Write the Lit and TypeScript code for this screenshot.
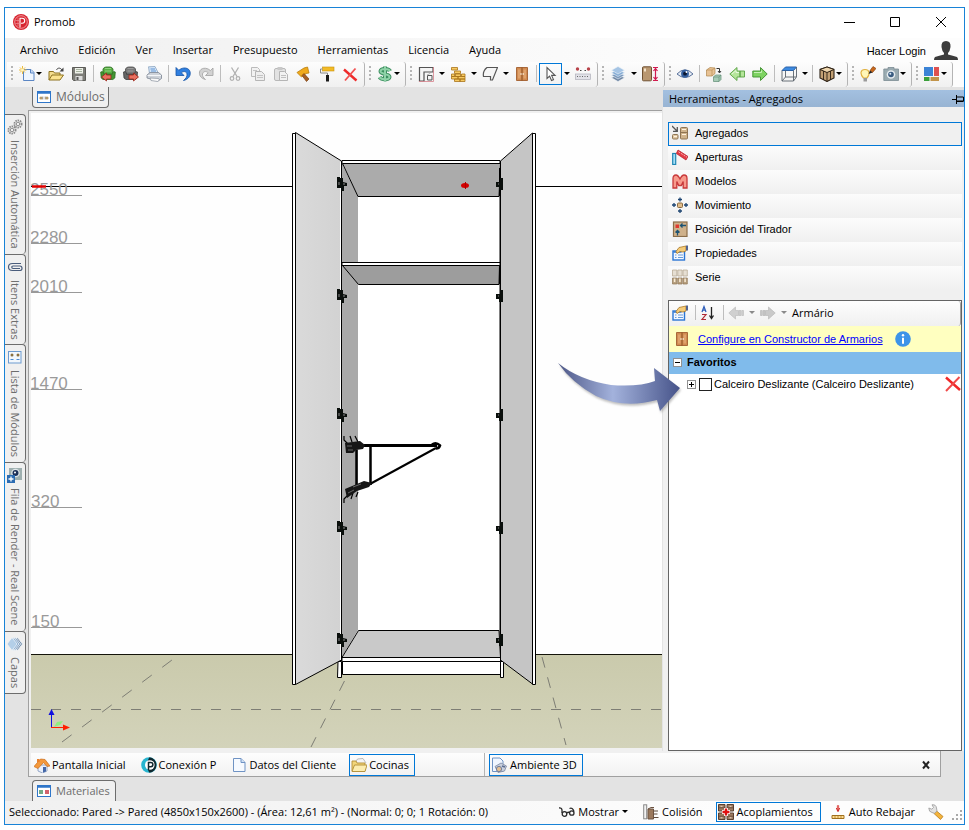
import { LitElement, html, svg, css, nothing, TemplateResult } from "lit";
import { customElement } from "lit/decorators.js";
import { classMap } from "lit/directives/class-map.js";

const icons: Record<string, TemplateResult> = {
  logo: svg`<circle cx="8" cy="8" r="8" fill="#d8242f"/><circle cx="8" cy="8" r="6.300" fill="none" stroke="#f6c4c7" stroke-width=".7"/><path d="M7 13.500V4.200h2.200a2.500 2.500 0 0 1 0 5H8" fill="none" stroke="#fff" stroke-width="1.100"/><path d="M2.500 6.500h4M2.500 9.500h4M5 3.500v9" stroke="#ee8f95" stroke-width=".7"/>`,
  nuevo: svg`<path d="M4.500 3.500h7.500l3 3v8h-10.500z" fill="#eef5fe" stroke="#5b86c4"/><path d="M11.500 3.500v3.500h3.500" fill="#c9dcf5" stroke="#5b86c4"/><path d="M3.500 0v8M0 4h7.500M1 1.500l5 5M6 1.500l-5 5" stroke="#eebd3c" stroke-width="1"/><circle cx="3.500" cy="4" r="1.500" fill="#fff5c0"/>`,
  abrir: svg`<path d="M1 14V5.500h4.500l1 1.500H12v2" fill="#f4dd8e" stroke="#8d7220"/><path d="M1 14l3-5h11.500l-3.500 5z" fill="#fbe38f" stroke="#8d7220"/><path d="M8.500 4c1-2.500 4-2.500 5.500 0" fill="none" stroke="#444"/><path d="M15.500 1.500v4h-4z" fill="#444"/>`,
  guardar: svg`<path d="M1.500 1.500h13v13h-12l-1-1z" fill="#7d7d78" stroke="#5c5c58"/><path d="M4 2h8v5.500H4z" fill="#eef1ea"/><path d="M5 3.500h6M5 5.500h6" stroke="#a8b3a0"/><path d="M4.500 10h7v4.500h-7z" fill="#dcdcdc"/><path d="M5.500 11h2v3h-2z" fill="#555"/>`,
  sofaVerde: svg`<path d="M3 8V3q1-2 3-2h4q2 0 3 2v5z" fill="#58ae45" stroke="#2f6d24" stroke-width=".8"/><path d="M5 2.500h6M5 5h6" stroke="#8fd37c"/><path d="M.7 6q2-1.200 3 1v1.500h8.600V7q1-2.200 3-1l-.5 6-2 1.500H3L1.200 12z" fill="#439632" stroke="#2f6d24" stroke-width=".8"/><path d="M6.500 9V7L1.500 11l5 4v-2H11V9z" fill="#e87060" stroke="#9c2418" stroke-width=".8"/>`,
  sofaGris: svg`<path d="M2.500 8V3q1-2 3-2h4q2 0 3 2v5z" fill="#7a7a7a" stroke="#4a4a4a" stroke-width=".8"/><path d="M4.500 2.500h6M4.500 5h6" stroke="#9d9d9d"/><path d="M.5 6q2-1.200 3 1v1.500h8V7q1-2.200 3-1l-.5 6-2 1.500H3L1 12z" fill="#666" stroke="#3d3d3d" stroke-width=".8"/><path d="M10.500 9V7l5 4-5 4v-2H6V9z" fill="#e87060" stroke="#9c2418" stroke-width=".8"/>`,
  imprimir: svg`<path d="M3.500 7.500L2.500.800 9 .5 12.500 7.500z" fill="#d5e6f8" stroke="#8aa3c0" stroke-width=".8"/><path d="M4.500 3h4.500M5 5h5" stroke="#5f93d2"/><path d="M1 9l3-2.500h8.500l3 2.500v3.500l-3.500 2.500L1 12z" fill="#cdd2d9" stroke="#7b8492" stroke-width=".8"/><path d="M1.500 9.500h13.500" stroke="#f4f6f9"/><path d="M4 12l8.500.5 1 1.500-2 1.500-6.500-1z" fill="#fafafa" stroke="#8a929e" stroke-width=".7"/>`,
  deshacer: svg`<path d="M1 1.500v8h8L6.300 6.800C8.500 4.800 11.500 5.300 12 8c.3 2.500-1 4.500-3.500 6.500 4.500-1 7.200-4.200 6.700-8.200C14.400 1.500 8 .5 3.800 4.300z" fill="#2f7fe0" stroke="#1453a6" stroke-width=".8"/>`,
  rehacer: svg`<path d="M15 2v7.500H7.500l2.700-2.700C8 4.800 5 5.300 4.500 8c-.3 2 .8 3.800 3 5.500C3.500 12.500 1 10 1.500 6 2.300 1.800 8.500.8 12.400 4.600z" fill="#d2d2d2" stroke="#a0a0a0" stroke-width=".8"/>`,
  cortar: svg`<path d="M4.500 1.500l5.500 9M11.500 1.500l-5.500 9" stroke="#b0b0b0" stroke-width="1.300"/><circle cx="5" cy="12.500" r="1.800" fill="none" stroke="#b0b0b0" stroke-width="1.200"/><circle cx="11" cy="12.500" r="1.800" fill="none" stroke="#b0b0b0" stroke-width="1.200"/>`,
  copiar: svg`<path d="M1.500 1.500h6l2 2v7h-8z" fill="#f2f2f2" stroke="#bbb"/><path d="M5.500 5.500h6l3 3v6h-9z" fill="#eee" stroke="#b5b5b5"/><path d="M7 9.500h6M7 11.500h6M3 4.500h4" stroke="#c4c4c4"/>`,
  pegar: svg`<rect x="1.500" y="2.500" width="11" height="12" rx="1.500" fill="#e2e2e2" stroke="#b8b8b8"/><rect x="4.500" y="1" width="5" height="3" fill="#c8c8c8"/><path d="M6.500 5.500h5l3 3v6h-8z" fill="#f2f2f2" stroke="#b5b5b5"/><path d="M8 9.500h5M8 11.500h5" stroke="#c0c0c0"/>`,
  martillo: svg`<path d="M1 6.500L8 2l3.500-1L13 7l-3 .5L5.500 11z" fill="#f0aa1c" stroke="#b97d0c" stroke-width=".8"/><path d="M8 7.500l5 5.500-2.500 2.500L6 9.500z" fill="#a55f24" stroke="#7b4214" stroke-width=".7"/>`,
  rodillo: svg`<rect x="3.500" y="1" width="11.500" height="4" fill="#f2bb26" stroke="#c8920e" stroke-width=".6"/><path d="M3.500 3H1.500v4h7v2" fill="none" stroke="#888"/><rect x="7" y="9" width="3" height="6.500" fill="#1a1a1a"/>`,
  borrar: svg`<path d="M2 3.500L14.500 14.500" stroke="#ee2a2a" stroke-width="2.400"/><path d="M13.500 2.500L3 14.500" stroke="#f25050" stroke-width="1.800"/>`,
  dolar: svg`<path d="M13 5C12 2.500 4 1.800 3.500 5.200 3.200 8.500 12.500 7.500 12.500 11c0 3.300-8 3-10 .2M8 .5v15" fill="none" stroke="#3d8f60" stroke-width="4"/><path d="M13 5C12 2.500 4 1.800 3.500 5.200 3.200 8.500 12.500 7.500 12.500 11c0 3.300-8 3-10 .2M8 .5v15" fill="none" stroke="#8fd3a8" stroke-width="2"/>`,
  planta: svg`<path d="M1.500 15V1.500H15v4.500H6V15z" fill="#f5f5f5" stroke="#555" stroke-width="1.200"/><path d="M1 15.500h14.500V1" fill="none" stroke="#d7808a" stroke-width=".8"/><path d="M9.500 14V9.500H14V14z" fill="none" stroke="#555"/><path d="M9 9q3-.5 4.500-4" fill="none" stroke="#999" stroke-width=".7"/>`,
  ladrillos: svg`<g fill="#f7ca62" stroke="#a8741a" stroke-width=".8"><path d="M1.500 1.500h6v2.500h-6zM4.500 5h6v2.500h-6zM1.500 8h3v2.500h-3zM5.500 8h5v2.500h-5zM11.500 8H15v2.500h-3.500zM1.500 10.500H8V13H1.500zM8 10.500h7V13H8zM4.500 13h5.500v2.500H4.500zM10 13h5v2.500h-5z"/></g>`,
  forma: svg`<path d="M5 1.500h10.500l-5 12.500H8.500v-3.500H1.500q-1-5.500 3.500-9z" fill="#f6f6f6" stroke="#555" stroke-width="1.200"/>`,
  armario: svg`<path d="M2.500 1.500h11v13h-11z" fill="#d08a50" stroke="#a9683a"/><path d="M8 1.500v13" stroke="#8a4f20"/><path d="M4 3.500h2.500v9H4zM9.500 3.500H12v9H9.500z" fill="#dfa26c"/><path d="M6.500 7h1v2h-1zM8.700 7h1v2h-1z" fill="#f8ecd8"/>`,
  cursor: svg`<path d="M4 1.500v11l2.600-2.400 1.900 4.400 2-.9-1.900-4.200h3.500z" fill="#fff" stroke="#555" stroke-width="1.100"/>`,
  regla: svg`<rect x=".5" y="8" width="15" height="5.500" fill="#e2e2e8" stroke="#b0b0ba" stroke-width=".7"/><path d="M2 10.500h12" stroke="#666" stroke-dasharray="1 1.500"/><circle cx="2.500" cy="3" r="1.700" fill="#b8434a"/><circle cx="13.500" cy="3" r="1.700" fill="#b8434a"/><path d="M5 4.500h1.500M9.500 4.500H11" stroke="#444"/>`,
  capas: svg`<g stroke="#eef3f8" stroke-width=".6"><path d="M8 8.500l6.500 3.300L8 15.500l-6.500-3.700z" fill="#6f86a3"/><path d="M8 6l6.500 3.300L8 13 1.500 9.300z" fill="#7c9abd"/><path d="M8 3.500l6.500 3.300L8 10.500 1.500 6.800z" fill="#86add5"/><path d="M8 .5l6.500 3.700L8 8 1.500 4.200z" fill="#a5c4e4"/></g>`,
  medida: svg`<rect x=".5" y=".8" width="9" height="14" rx="1" fill="#b99770" stroke="#6f5132"/><path d="M2 2.500h2v3H2z" fill="#f4e4cc"/><path d="M11 1.500h5M11 14.500h5M13.500 3v10M11.500 5l2-2.500 2 2.500M11.500 11l2 2.500 2-2.500" fill="none" stroke="#d01c50" stroke-width="1.200"/>`,
  ojo: svg`<path d="M0 8Q8-.5 16 8q-8 7-16 0z" fill="#e6ecf4" stroke="#5a719a"/><circle cx="8" cy="7.700" r="3.900" fill="#35609f"/><circle cx="8" cy="7.700" r="1.900" fill="#0a1630"/><circle cx="9.500" cy="6" r="1" fill="#fff"/>`,
  cajas: svg`<path d="M.5 4L4 1.500l5 .5v5.500L6 10H.5z" fill="#e8c294" stroke="#b0864e" stroke-width=".7"/><path d="M.5 4H6l3-2M6 4v6" stroke="#b0864e" stroke-width=".6" fill="none"/><path d="M7.500 11l2-2H15v4.500l-2 2H7.500z" fill="#a6cbb5" stroke="#5f8c74" stroke-width=".7"/><path d="M7.500 11H13v4.500M13 11l2-2" stroke="#5f8c74" stroke-width=".6" fill="none"/><path d="M10.500 2.500h3v4M12 5l1.500 2L15 5" stroke="#333" fill="none"/>`,
  izquierda: svg`<path d="M.8 8L8 1.500V5h3v6H8v3.500zM11 5h4.500v6H11z" fill="#b5e59a" stroke="#58a244" stroke-width=".9"/><path d="M3 8l4-3.500v2h3" fill="none" stroke="#e6f8dc"/>`,
  derecha: svg`<path d="M15.200 8L8.500 1.500V5H.800v6h7.700v3.500z" fill="#7ed362" stroke="#3d8f2c" stroke-width=".9"/><path d="M2 6.500h7.500v-2" fill="none" stroke="#c8f0b8"/>`,
  cubo: svg`<path d="M4.500 1h11l-3 3.500H1z" fill="#3c8ae0" stroke="#2b63aa"/><path d="M1 4.500V15h11.500V4.500M15.500 1v10l-3 4M4.500 4.500V11H15M4.500 11L1 15" fill="none" stroke="#59626c" stroke-width=".9"/>`,
  caja3d: svg`<path d="M8 1l7 2.500v8.500l-7 3.500L1 12V3.500z" fill="#c2a074" stroke="#2d2114" stroke-width="1.100"/><path d="M1 3.500l7 3 7-3L8 1z" fill="#eed6ae" stroke="#2d2114"/><path d="M8 6.500v9M4.500 5v9M11.500 5v9" stroke="#2d2114" stroke-width=".9"/>`,
  lampara: svg`<path d="M3.500 12C-.5 8 .5 3.500 5 3.500S10.500 8 7 12z" fill="#fff6b8" stroke="#e0b040" stroke-width="1.200"/><path d="M3.500 12h3.500v3.500H3.500z" fill="#9a9a9a"/><path d="M10 4.500L13 .5l3 2-3.500 4z" fill="#c8681c" stroke="#7a3a0c" stroke-width=".6"/><path d="M8.500 8L10 4.500 12.500 6.500z" fill="#222"/>`,
  camara: svg`<path d="M.8 3H5V1.500h6V3h4.500v11.500H.800z" fill="#9aabb1" stroke="#7b8c93" stroke-width=".8"/><circle cx="8" cy="8.500" r="4.300" fill="#e6ecef"/><circle cx="8" cy="8.500" r="2.800" fill="#3a5c80"/><circle cx="7.300" cy="7.800" r="1" fill="#dbe9f6"/>`,
  colores: svg`<path d="M0 1h9v9H0z" fill="#3b83d6"/><path d="M10 1h5v9h-5z" fill="#de5050"/><path d="M0 11h5.500v4H0z" fill="#3a9f3a"/><path d="M6.500 11H15v4H6.500z" fill="#c2944a"/>`,
  ventana: svg`<rect x="1.500" y="2.500" width="13" height="11" fill="#fff" stroke="#2f76c9"/><path d="M1 3.500h14" stroke="#2f76c9" stroke-width="2.500"/><circle cx="5" cy="9" r="1.600" fill="#b59a68"/><circle cx="11" cy="9" r="1.600" fill="#b59a68"/><path d="M6.800 7.500v3M9.200 7.500v3" stroke="#555" stroke-width=".6"/>`,
  materiales: svg`<rect x="1.500" y="2.500" width="13" height="11" fill="#fff" stroke="#2f76c9"/><path d="M1 3.500h14" stroke="#2f76c9" stroke-width="2.500"/><path d="M3 7h4v4H3z" fill="#74ab86"/><path d="M9 7h4v4H9z" fill="#d3626c"/>`,
  engranes: svg`<g fill="none" stroke="#8a8a8a"><circle cx="5" cy="11" r="3.600" stroke-width="1.800" stroke-dasharray="1.500 .8"/><circle cx="5" cy="11" r="1.800"/><circle cx="11" cy="5" r="3.600" stroke-width="1.800" stroke-dasharray="1.500 .8"/><circle cx="11" cy="5" r="1.800"/></g>`,
  clip: svg`<path d="M14 4.500H5.500Q1.500 4.500 1.500 8t4 3.500H13q2 0 2-2.200t-2-2.300H6q-1.200 0-1.200 1.200T6 9.500h7" fill="none" stroke="#4a5d7c" stroke-width="1.200"/>`,
  lista: svg`<rect x="1.500" y="2.500" width="12.500" height="11.500" fill="#f2f7fc" stroke="#6d9bd0"/><circle cx="5" cy="6" r="1.500" fill="#8a7040"/><circle cx="11" cy="6" r="1.500" fill="#8a7040"/><path d="M3.500 10.500h3M9.500 10.500h3" stroke="#4a8ad4"/>`,
  render: svg`<rect x="2" y="1" width="13" height="12" fill="#9fb0b0"/><circle cx="8.500" cy="6" r="4.300" fill="#dfe7ea"/><circle cx="8.500" cy="6" r="3" fill="#1c3058"/><circle cx="8" cy="5.500" r="1" fill="#fff"/><rect x="0" y="8" width="8" height="8" fill="#2c6cb2"/><path d="M4 9.500v5M1.500 12h5" stroke="#fff" stroke-width="1.300"/>`,
  rombos: svg`<g stroke="#f0f4f8" stroke-width=".8"><path d="M10.500 1.500l5 6.500-5 6.500-5-6.500z" fill="#6c87a6"/><path d="M8.700 1.500l5 6.500-5 6.500-5-6.500z" fill="#7c9dc0"/><path d="M6.900 1.500l5 6.500-5 6.500-5-6.500z" fill="#8db0d4"/><path d="M5 1.500L10 8l-5 6.500L0 8z" fill="#b4cfe8"/></g>`,
  agregados: svg`<path d="M0 1l5 5M5.300 2v4.300H1" fill="none" stroke="#555" stroke-width="1.300"/><rect x=".5" y="9.500" width="5.500" height="4.500" rx="1" fill="#e0c8a4" stroke="#8f7553"/><rect x="8.500" y="2.500" width="7" height="11.500" rx="1" fill="#d0b48c" stroke="#8f7553"/><path d="M8.500 7.500h7" stroke="#8f7553"/><path d="M10 4.500h4M10 9.500h4M2 11.500h3" stroke="#fff3df"/>`,
  aperturas: svg`<rect x=".7" y="4.500" width="3" height="11" fill="#a5def7" stroke="#1f86b4" stroke-width="1.200"/><path d="M6 1L16 7.500 14 11 4.300 4.500z" fill="#e43a44" stroke="#b01a26" stroke-width=".7"/><path d="M6.500 2.800l8.500 5.400" stroke="#f8b0b4" stroke-dasharray="2 1"/>`,
  modelos: svg`<path d="M1 15V5.500Q1 2 4 2q2 0 4 4 2-4 4-4 3 0 3 3.500V15h-3.800V8.500L9.300 12.500H6.700L4.800 8.500V15z" fill="#f79a8c" stroke="#c8383a" stroke-width="1.300"/>`,
  movimiento: svg`<path d="M8 .5v4M6 2.500h4M8 12v4M6 14h4M0 8h4M2 6v4M12 8h4M14 6v4" stroke="#1d4471" stroke-width="1.300"/><rect x="5.500" y="6" width="5" height="4.500" rx="1" fill="#e0bd8b" stroke="#8b6a40"/>`,
  tirador: svg`<rect x="1.500" y="1" width="13.500" height="14.500" fill="#cfb18b" stroke="#8a6d4a" stroke-width="1.200"/><path d="M3.500 3.500H7V7H3.500z" fill="#e03a30"/><path d="M14 4.500H8.500M10.500 2.500l-2 2 2 2M5.500 14.500V9.500M3.500 11.500l2-2 2 2" fill="none" stroke="#1d5373" stroke-width="1.300"/>`,
  propiedades: svg`<rect x="1" y="6" width="11.500" height="9" fill="#f3f8ff" stroke="#2b76d4" stroke-width="1.400"/><path d="M1.500 7h8" stroke="#2b76d4" stroke-width="1.500"/><path d="M3 10h1.500M6 10h5M3 12.500h1.500M6 12.500h5" stroke="#6a9cd8"/><path d="M4 6.500L7 2.500 14 1v5l-3 1-3-.5-3 2z" fill="#f4cb78" stroke="#a9782a" stroke-width=".8"/><path d="M14 .5h2v5h-2z" fill="#54648e"/>`,
  serie: svg`<g stroke="#b3a58e" stroke-width=".7"><path d="M.5 1h4.300v6H.5zM5.800 1h4.300v6H5.800zM11 1h4.300v6H11z" fill="#e6dfd3"/><path d="M.5 9h4.300v6H.5zM5.800 9h4.300v6H5.800zM11 9h4.300v6H11z" fill="#b9a180" stroke="#8c7453"/></g><path d="M2.600 9.500V13M7.900 9.500V13M13.100 9.500V13" stroke="#f8ecd6" stroke-width="1.500"/>`,
  ordenar: svg`<path d="M11.500 2v11M9.500 10.500l2 3 2-3" fill="none" stroke="#222" stroke-width="1.300"/><path d="M2 7l2-5.500L6 7M2.600 5.200h2.800" fill="none" stroke="#2b5bb8" stroke-width="1.200"/><path d="M2 9.500h4L2 14.500h4" fill="none" stroke="#b02a35" stroke-width="1.200"/>`,
  atras: svg`<path d="M.8 8L7.500 2v3.500h3v5h-3V14zM11 5.500h2v5h-2zM13.800 5.500h1.700v5h-1.700z" fill="#d0d0d0" stroke="#b8b8b8" stroke-width=".6"/>`,
  adelante: svg`<path d="M15.200 8L8.500 2v3.500h-3v5h3V14zM3 5.500h2v5H3zM.5 5.500h1.700v5H.5z" fill="#c9c9c9" stroke="#b3b3b3" stroke-width=".6"/>`,
  info: svg`<circle cx="8" cy="8" r="7.800" fill="#3d94e8"/><circle cx="8" cy="4.300" r="1.200" fill="#fff"/><path d="M8 6.800v6" stroke="#fff" stroke-width="2"/>`,
  casa: svg`<path d="M4 8h9v6l-4.500 2L4 14z" fill="#eaf0fa" stroke="#7f94bd" stroke-width=".8"/><path d="M0 9.500L6.500 2 11 2.500l5 6.500-3 .5-3.500-4-5.500 6z" fill="#f4993c" stroke="#c86c1a" stroke-width=".7"/><path d="M3 2h2.500v3H3z" fill="#e8802c"/><path d="M9 10h3v4.500l-3 1z" fill="#4568a8"/>`,
  conexion: svg`<circle cx="8" cy="8" r="7.800" fill="#27b4cf"/><path d="M8.500.3a7.800 7.800 0 0 1 0 15.500C6 13 5 5 8.500.3z" fill="#10282f"/><circle cx="8.800" cy="8" r="4.800" fill="#fff"/><path d="M7.500 13V5.500h2.300a2 2 0 0 1 0 4.200H8" fill="none" stroke="#10282f" stroke-width="1.500"/>`,
  hoja: svg`<path d="M2.500 1.500H10l4 4v9H2.500z" fill="#f6faff" stroke="#6f93c4"/><path d="M10 1.500v4h4" fill="#cfe0f6" stroke="#6f93c4"/>`,
  carpeta: svg`<path d="M4 6l2.500-4L12 1.500 15 6" fill="#f5f5f5" stroke="#aaa" stroke-width=".8"/><path d="M1 14V4h4l1 2h8v8z" fill="#f2d67a" stroke="#b18d34" stroke-width=".9"/><path d="M1 14.500L3.500 8H16l-2 6.500z" fill="#fcedb0" stroke="#b18d34" stroke-width=".9"/>`,
  ambiente: svg`<path d="M1.500 1H9l3 3v10.500H1.500z" fill="#f0f6ff" stroke="#6f93c4"/><path d="M4 9.500l6-3.500 5.500 3-2 5-6.500 1.500z" fill="#c8cfdd" stroke="#7b87a0" stroke-width=".8"/><circle cx="8" cy="12" r="2.600" fill="#e4c094" stroke="#6f7d9c"/><path d="M11 9l3 1" stroke="#5c6d90" stroke-width="1.500"/>`,
  lentes: svg`<g fill="none" stroke="#2a2a2a" stroke-width="1.300"><path d="M0 4q2.500-.5 3 2v3M8 9q1.500-1.500 2.500 0"/><circle cx="5.500" cy="10" r="2.300"/><circle cx="12.800" cy="9" r="2.200"/><path d="M10.500 4.500q3-1.500 4.500 3"/></g>`,
  colision: svg`<rect x=".7" y=".8" width="3" height="14" fill="#f2f2f2" stroke="#888"/><path d="M5 5h5.500v10H5z" fill="#9a785c" stroke="#6b5240"/><path d="M5 5l3-1.500h3" stroke="#6b5240" fill="none"/><path d="M11 7h4M11 10h3.500M11 13.500h4.500" stroke="#5d4a3c" stroke-width="1.200"/>`,
  acople: svg`<g fill="#9c7b62" stroke="#5a4030"><path d="M.5.500h6.500v6.500H.5zM9 .500h6.500v6.500H9zM.5 9h6.500v6.500H.5zM9 9h6.500v6.500H9z"/></g><path d="M.5 3.800h6.500M9 3.800h6.500M.5 12.200h6.500M9 12.200h6.500" stroke="#5a4030" stroke-width=".7"/><path d="M2.500 2.300h2M11.500 2.300h2M2.500 13.800h2M11.500 13.800h2" stroke="#f0dcc8"/><path d="M8 4v8M4 8h8" stroke="#fff" stroke-width="4"/><path d="M8 4.500v7M4.500 8h7" stroke="#e01010" stroke-width="2.400"/>`,
  rebajar: svg`<path d="M8 1.500V7" stroke="#f2a098" stroke-width="2.500"/><path d="M8 1v6.500M6.300 4L8 7.500 9.700 4" fill="none" stroke="#d23030"/><path d="M2 11.500h12v3H2z" fill="#ffdc90" stroke="#a0701c"/><path d="M5 12v2.500M8 12v2.500M11 12v2.500" stroke="#a0701c" stroke-width=".7"/>`,
  llave: svg`<path d="M8 6.500l7 6-2.500 3L6 9.500z" fill="#f4b43c" stroke="#b87c1c" stroke-width=".8"/><path d="M.8 4l3 1.200L5.500 3.500 4 .8Q8 .3 8.500 4L9 7 6.500 9.300 4 8.500Q.8 8 .8 4z" fill="#e2e2e2" stroke="#999" stroke-width=".8"/>`,
  equis: svg`<path d="M1 1.500L15 14" stroke="#f02828" stroke-width="2.400"/><path d="M14.500 1L1 15" stroke="#f04a4a" stroke-width="1.900"/>`,
  persona: svg`<path d="M12 0q5 0 4.500 6-.5 4-2.500 6v1.500q5 1 9 2.500 1 1 1 3H0q0-2 1-3 4-1.500 9-2.500V12Q8 10 7.500 6 7 0 12 0z" fill="#3c3c3c"/>`,
};

const icon = (name: string, size = "") =>
  html`<svg class="ico ${size}" viewBox=${name === "persona" ? "0 0 24 19" : "0 0 16 16"} aria-hidden="true">${icons[name]}</svg>`;

type Tool = { i?: string; t?: string; kind?: "drop" | "split" | "sep"; on?: boolean };
const sep: Tool = { kind: "sep" };

const strips: Tool[][] = [
  [
    { i: "nuevo", t: "Nuevo", kind: "drop" }, { i: "abrir", t: "Abrir" }, { i: "guardar", t: "Guardar" }, sep,
    { i: "sofaVerde", t: "Importar" }, { i: "sofaGris", t: "Exportar" }, { i: "imprimir", t: "Imprimir" }, sep,
    { i: "deshacer", t: "Deshacer" }, { i: "rehacer", t: "Rehacer" }, sep,
    { i: "cortar", t: "Cortar" }, { i: "copiar", t: "Copiar" }, { i: "pegar", t: "Pegar" },
    { i: "martillo", t: "Construir" }, { i: "rodillo", t: "Pintar" }, { i: "borrar", t: "Borrar" },
  ],
  [{ i: "dolar", t: "Presupuesto", kind: "drop" }],
  [
    { i: "planta", t: "Planta", kind: "split" }, { i: "ladrillos", t: "Paredes", kind: "split" },
    { i: "forma", t: "Formas", kind: "split" }, { i: "armario", t: "Armarios" }, sep,
    { i: "cursor", t: "Seleccionar", kind: "split", on: true }, { i: "regla", t: "Cotas" },
  ],
  [{ i: "capas", t: "Capas", kind: "split" }, { i: "medida", t: "Medidas" }],
  [
    { i: "ojo", t: "Visualizar" }, sep, { i: "cajas", t: "Cambiar" }, { i: "izquierda", t: "Anterior" },
    { i: "derecha", t: "Siguiente" }, sep, { i: "cubo", t: "Vista", kind: "split" }, sep,
    { i: "caja3d", t: "Modo", kind: "drop" },
  ],
  [{ i: "lampara", t: "Luces" }, { i: "camara", t: "Render", kind: "drop" }],
  [{ i: "colores", t: "Ventanas", kind: "drop" }],
];

const menus = ["Archivo", "Edición", "Ver", "Insertar", "Presupuesto", "Herramientas", "Licencia", "Ayuda"];

const railTabs = [
  ["engranes", "Inserción Automática"],
  ["clip", "Itens Extras"],
  ["lista", "Lista de Módulos"],
  ["render", "Fila de Render - Real Scene"],
  ["rombos", "Capas"],
];

const panelItems = [
  ["agregados", "Agregados"],
  ["aperturas", "Aperturas"],
  ["modelos", "Modelos"],
  ["movimiento", "Movimiento"],
  ["tirador", "Posición del Tirador"],
  ["propiedades", "Propiedades"],
  ["serie", "Serie"],
];

const controls: [string, string][] = [
  ["Minimizar", "M1 6.500h11"],
  ["Maximizar", "M1.500 1.500h9v9h-9z"],
  ["Cerrar", "M1 1l10 10M11 1L1 11"],
];

const levels: [string, number][] = [["2550", 195], ["2280", 243], ["2010", 292], ["1470", 389], ["320", 507], ["150", 627]];
const hingeRows = [183, 295, 414, 527, 639];

const baseStyles = css`
  * { box-sizing: border-box; }
  button {
    font: inherit; color: inherit; background: none; border: 0; padding: 0; margin: 0;
    display: flex; align-items: center; white-space: nowrap;
  }
  .ico { width: 16px; height: 16px; flex: none; display: block; }
  .caret { width: 0; height: 0; flex: none; border: 3px solid transparent; border-top-color: #000; border-bottom: 0; }
`;

@customElement("tool-strip")
class ToolStrip extends LitElement {
  static properties = { tools: { attribute: false } };
  declare tools: Tool[];
  static styles = [baseStyles, css`
    :host {
      display: flex; align-items: center; height: 25px; padding: 0 3px 2px 4px;
      border-right: 1px solid #b4b4b4; border-radius: 0 3px 3px 0;
      background: linear-gradient(#fdfdfd, #f0f0f0);
    }
    .grip { width: 4px; height: 15px; background: repeating-linear-gradient(#b5b5b5 0 2px, transparent 2px 4px) 0 0 / 2px 100% no-repeat; }
    .btn { width: 23px; height: 22px; padding-left: 4px; }
    .btn.drop { width: 29px; gap: 1px; }
    .btn.on { border: 1px solid #0078d7; padding-left: 3px; }
    .arrow { width: 9px; height: 22px; justify-content: center; }
    .sep { width: 6px; height: 17px; background: linear-gradient(#bdbdbd, #bdbdbd) 3px 0 / 1px 100% no-repeat; }
  `];
  render() {
    return html`<span class="grip"></span>${(this.tools ?? []).map((t) =>
      t.kind === "sep"
        ? html`<span class="sep"></span>`
        : html`<button class=${classMap({ btn: true, drop: t.kind === "drop", on: !!t.on })} aria-label=${t.t ?? ""}>
              ${icon(t.i!)}${t.kind === "drop" ? html`<span class="caret"></span>` : nothing}
            </button>
            ${t.kind === "split" ? html`<button class="arrow" aria-label="${t.t} opciones"><span class="caret"></span></button>` : nothing}`
    )}`;
  }
}

@customElement("scene-view")
class SceneView extends LitElement {
  static styles = css`
    :host { display: block; min-height: 0; overflow: hidden; background: #fdfdfd; }
    svg { display: block; width: 100%; height: 100%; }
    .level { font: 17px "Liberation Sans", Arial, sans-serif; fill: #9a9a9a; }
  `;
  render() {
    return html`<svg viewBox="31 113 631 635" preserveAspectRatio="xMidYMid slice" role="img" aria-label="Vista 3D">
      <defs>
        <linearGradient id="dl"><stop offset="0" stop-color="#dadada"/><stop offset="1" stop-color="#d2d2d2"/></linearGradient>
        <linearGradient id="fl" x2="0" y2="1"><stop offset="0" stop-color="#cacaac"/><stop offset="1" stop-color="#d3d3ba"/></linearGradient>
      </defs>
      <rect x="31" y="113" width="631" height="541" fill="#fefefe"/>
      <rect x="31" y="654" width="631" height="94" fill="url(#fl)"/>
      <path d="M31 654.500H662" stroke="#14140a"/>
      <g fill="none" stroke="#7d7d74">
        <path d="M31 709.500H662" stroke-dasharray="10 10"/>
        <path d="M62 742L172 660" stroke-dasharray="12 13"/>
        <path d="M311 747L347 676M542 657L566 745" stroke-dasharray="11 10"/>
      </g>
      <path d="M31 186.500H662" stroke="#000"/>
      ${levels.map(([t, y]) => svg`<text class="level" x=${t.length > 3 ? 30 : 31} y=${y}>${t}</text><path d=${`M31 ${y + 0.5}H82`} stroke="#999"/>`)}
      <path d="M32 186.500H46" stroke="#e00000" stroke-width="2.500"/>
      <g stroke="#000" stroke-width="1">
        <path d="M342 160.500H500V661H342z" fill="#fff"/>
        <path d="M342 164L358 196V630L342 657z" fill="#a9a9a9" stroke="none"/>
        <path d="M342.500 163.500H500.500L499 196.500H358z" fill="#ababab"/>
        <path d="M342 262.500H500V265.500H342z" fill="#fff"/>
        <path d="M342.500 265.500H499.500L499 284.500H358.500z" fill="#9d9d9d"/>
        <path d="M358.500 630.500H499L500.500 657.500H342z" fill="#c9c9c9"/>
        <path d="M342 657.500H500.500V661.500H342z" fill="#fff"/>
        <path d="M338 661.500H341.500V677.500H337.500zM500.500 661.500H503.500V677.500H500.500zM342.500 661.500H500.500V674.500H342.500z" fill="#fff"/>
        <path d="M295.500 132.500L341.500 161V660L295.500 684.500z" fill="url(#dl)"/>
        <path d="M340.500 162V660" stroke="#fff"/>
        <path d="M292.500 133.500H295.500V684.500H292.500z" fill="#fff"/>
        <path d="M500.500 161L532.500 133V684L500.500 660z" fill="#c5c5c5"/>
        <path d="M532.500 133.500H535.500V684.500H532.500z" fill="#fff"/>
        <path d="M341.500 161V661M500.500 161V661M499.500 168V196M499.500 268V284"/>
      </g>
      <ellipse cx="465" cy="185.500" rx="4" ry="2.500" fill="#d40000"/><path d="M465.500 182V189" stroke="#b00000"/>
      ${hingeRows.map((y) => svg`
        <path d=${`M337 ${y - 6}h3v1h3v4l4 1v3h-3v5h-3v-3h-4z`} fill="#0a0f0c"/>
        <path d=${`M503 ${y - 5}h-3v4h-4v5h3v3h4z`} fill="#0a0f0c"/>
        <path d=${`M339 ${y - 1}v3M343 ${y + 1}h2M498 ${y + 1}h1`} stroke="#888"/>`)}
      <g fill="none" stroke="#000">
        <path d="M364 445.500H437" stroke-width="3"/>
        <path d="M436 448L370 484" stroke-width="2"/>
        <path d="M356.500 450V488M370.500 446V485" stroke-width="2.500"/>
        <path d="M344 436v4l4 4M350 436l2 6M355 436l3 6M344 503v-4l4-4M351 499l2-6M356 497l2-5" stroke-width="1.200"/>
        <path d="M432 444.500q4-3 8 1-1 3-4 3" stroke-width="2.500"/>
      </g>
      <path d="M345 443L360 441 365 445 363 449 356 450 353 453H346z" fill="#161616"/>
      <path d="M345 489L364 481 372 483 369 487 357 491 347 498z" fill="#161616"/>
      <path d="M347 446h5M348 450h5M348 493l6-3M353 487l8-3" stroke="#666"/>
      <path d="M51.500 727V714" stroke="#1010e0"/><path d="M51.500 709l3 6h-6z" fill="#1010e0"/>
      <path d="M51 727.500H64" stroke="#ff2000"/><path d="M70 727.500l-7-3v6z" fill="#ff2000"/>
      <path d="M54 727l3-5 6-1-3 4z" fill="#90ee80"/>
    </svg>`;
  }
}

@customElement("app-root")
class AppRoot extends LitElement {
  static styles = [baseStyles, css`
    :host {
      display: flex; height: 100vh; min-height: 600px; padding: 7px 4px 5px;
      background: #fff; color: #000; font: 11px/16px "Open Sans", "Noto Sans", sans-serif; box-sizing: border-box;
    }
    .window { flex: 1; min-width: 0; display: flex; flex-direction: column; border: 1px solid #1883d7; }
    .title { display: flex; align-items: center; height: 30px; padding: 0 0 2px 8px; gap: 5px; }
    .title h1 { flex: 1; margin: 0; font: inherit; }
    .controls { display: flex; }
    .win { width: 46px; height: 28px; justify-content: center; }
    .win svg { width: 12px; height: 12px; fill: none; stroke: #000; }
    .menubar { display: flex; align-items: center; height: 24px; padding: 0 6px 0 15px; background: linear-gradient(90deg, #f0f0f0, #fdfdfd 75%); }
    .menus { display: flex; gap: 20px; flex: 1; }
    .login { gap: 8px; font: 11px "Liberation Sans", Arial, sans-serif; padding-top: 1px; }
    .avatar { width: 24px; height: 19px; }
    .toolbar { display: flex; height: 25px; padding-left: 2px; background: linear-gradient(90deg, #f0f0f0, #fdfdfd 75%); }
    .work { flex: 1; min-height: 0; display: flex; background: #e3e3e3; }
    .rail { width: 23px; padding: 27px 2px 0 0; display: flex; flex-direction: column; }
    .rail button {
      width: 21px; writing-mode: vertical-rl; gap: 5px; padding: 4px 0 5px; color: #6d6d6d; background: #f0f0f0;
      border: 1px solid #6d6d6d; border-left: 0; border-bottom-width: 0; border-radius: 0 4px 4px 0;
    }
    .rail button:last-child { border-bottom-width: 1px; }
    .stage { flex: 1; min-width: 0; display: flex; flex-direction: column; }
    .upper { flex: 1; min-height: 0; display: flex; }
    .center { flex: 1; min-width: 0; display: flex; flex-direction: column; }
    .tabrow { height: 23px; padding-left: 4px; }
    .tab { height: 21px; gap: 4px; padding: 0 4px 0 3px; color: #6d6d6d; background: #f0f0f0; border: 1px solid #6d6d6d; }
    .tab.top { border-top: 0; border-radius: 0 0 4px 4px; font-size: 12px; padding-right: 3px; }
    .tab.bottom { border-bottom: 0; border-radius: 4px 4px 0 0; padding-right: 5px; }
    .frame { flex: 1; min-height: 0; display: flex; padding: 2px 0 3px 2px; background: #f0f0f0; border: solid #a0a0a0; border-width: 1px 0 0 1px; }
    scene-view { flex: 1; }
    .panel { position: relative; width: 302px; padding: 3px 0 0 1px; display: flex; flex-direction: column; }
    .panel header { display: flex; align-items: center; justify-content: space-between; height: 17px; padding-left: 6px; background: linear-gradient(#a3c0e0, #98b4d3); }
    .panel h2 { margin: 0; font: inherit; }
    .pin { width: 12px; height: 12px; }
    .panel .body { flex: 1; min-height: 0; display: flex; flex-direction: column; gap: 10px; padding: 15px 2px 0 5px; background: #f0f0f0; font: 11px/14px "Liberation Sans", Arial, sans-serif; }
    .list button { width: 100%; height: 24px; padding: 0 0 2px 4px; gap: 7px; background: linear-gradient(#fcfcfc, #f0f0f0); }
    .list button.on { border: 1px solid #0078d7; padding-left: 3px; background: #f0f0f0; }
    .props { flex: 1; min-height: 0; background: #fff; border: 1px solid #646464; }
    .ptools { display: flex; align-items: center; height: 25px; padding: 0 0 2px 3px; background: linear-gradient(#fdfdfd, #f0f0f0); border-radius: 0 3px 3px 0; border-right: 1px solid #a0a0a0; font: 11px "Open Sans", "Noto Sans", sans-serif; }
    .ptools i { width: 1px; height: 15px; background: #bdbdbd; margin: 0 4px 0 7px; }
    .dim { border-top-color: #8a8a8a; margin: 0 5px; }
    .banner { display: flex; align-items: center; height: 26px; padding-left: 5px; gap: 8px; background: #ffffc0; }
    .banner a { color: #00f; text-decoration: underline; margin-right: 4px; }
    .group { display: flex; align-items: center; height: 22px; gap: 5px; padding: 0 0 2px 4px; background: #80bbeb; font-weight: bold; }
    .entry { display: flex; align-items: center; height: 21px; padding: 0 0 1px 18px; }
    .entry label { flex: 1; display: flex; align-items: center; gap: 2px; padding-left: 3px; white-space: nowrap; }
    .entry input { appearance: none; width: 13px; height: 13px; margin: 0; background: #fff; border: 1px solid #222; }
    .toggle { width: 9px; height: 9px; background: #fff; border: 1px solid #919191; }
    .toggle svg { width: 7px; height: 7px; stroke: #000; }
    .pointer { position: absolute; left: -104px; top: 274px; width: 124px; height: 54px; pointer-events: none; filter: drop-shadow(1px 2px 1px #8888); }
    .docs { display: flex; height: 26px; margin-right: 23px; padding: 2px 0 0 2px; background: #f0f0f0; border: solid #a0a0a0; border-width: 0 1px 1px; }
    .docset { display: flex; align-items: center; background: linear-gradient(#fdfdfd, #f2f2f2); }
    .docset.open { width: 454px; gap: 7px; border-right: 1px solid #b4b4b4; padding-left: 1px; }
    .docset.views { flex: 1; padding: 0 8px 0 4px; justify-content: space-between; }
    .doc { height: 22px; gap: 2px; padding: 0 5px 0 1px; border: 1px solid transparent; }
    .doc.on { border-color: #0078d7; }
    .docset.views .doc { gap: 3px; }
    .matrow { height: 24px; padding: 3px 0 0 4px; }
    .status { display: flex; align-items: center; height: 23px; padding: 0 0 2px 4px; background: linear-gradient(90deg, #f0f0f0, #fdfdfd 75%); white-space: nowrap; }
    .status output { flex: 1; }
    .stools { display: flex; align-items: center; gap: 7px; margin-right: 8px; }
    .stools .doc { height: 20px; gap: 3px; }
    .stools .doc.on { padding-right: 7px; }
    .resize { width: 12px; height: 12px; fill: #a9a9a9; align-self: flex-end; }
  `];

  render() {
    return html`<div class="window">
      <div class="title">
        ${icon("logo")}<h1>Promob</h1>
        <div class="controls">${controls.map(([t, d]) => html`<button class="win" aria-label=${t}><svg viewBox="0 0 12 12"><path d=${d}/></svg></button>`)}</div>
      </div>
      <nav class="menubar">
        <div class="menus">${menus.map((m) => html`<button>${m}</button>`)}</div>
        <button class="login">Hacer Login ${icon("persona", "avatar")}</button>
      </nav>
      <div class="toolbar">${strips.map((s) => html`<tool-strip .tools=${s}></tool-strip>`)}</div>
      <div class="work">
        <nav class="rail">${railTabs.map(([i, t]) => html`<button>${icon(i)}<span>${t}</span></button>`)}</nav>
        <div class="stage">
          <div class="upper">
            <main class="center">
              <div class="tabrow"><button class="tab top">${icon("ventana")}Módulos</button></div>
              <div class="frame"><scene-view></scene-view></div>
            </main>
            ${this.panel()}
          </div>
          <nav class="docs">
            <div class="docset open">
              <button class="doc">${icon("casa")}Pantalla Inicial</button>
              <button class="doc">${icon("conexion")}Conexión P</button>
              <button class="doc">${icon("hoja")}Datos del Cliente</button>
              <button class="doc on">${icon("carpeta")}Cocinas</button>
            </div>
            <div class="docset views">
              <button class="doc on">${icon("ambiente")}Ambiente 3D</button>
              <button aria-label="Cerrar vista"><svg width="12" height="10" viewBox="0 0 12 10"><path d="M3 1.500l6 7M9 1.500l-6 7" stroke="#222" stroke-width="2"/></svg></button>
            </div>
          </nav>
          <div class="matrow"><button class="tab bottom">${icon("materiales")}Materiales</button></div>
        </div>
      </div>
      <footer class="status">
        <output>Seleccionado: Pared -&gt; Pared (4850x150x2600) - (Área: 12,61 m²) - (Normal: 0; 0; 1 Rotación: 0)</output>
        <div class="stools">
          <button class="doc">${icon("lentes")}Mostrar <span class="caret"></span></button>
          <button class="doc">${icon("colision")}Colisión</button>
          <button class="doc on">${icon("acople")}Acoplamientos</button>
          <button class="doc">${icon("rebajar")}Auto Rebajar</button>
          <button aria-label="Configurar">${icon("llave")}</button>
        </div>
        <svg class="resize" viewBox="0 0 12 12"><path d="M8 0h2v2H8zM4 4h2v2H4zM8 4h2v2H8zM0 8h2v2H0zM4 8h2v2H4zM8 8h2v2H8z"/></svg>
      </footer>
    </div>`;
  }

  private panel() {
    return html`<aside class="panel">
      <header><h2>Herramientas - Agregados</h2>
        <button aria-label="Fijar panel"><svg class="pin" viewBox="0 0 12 12"><path d="M0 6.500h4M4.500 2v9M4.500 4h7v4h-7M4.500 8.500h7" fill="none" stroke="#000"/></svg></button>
      </header>
      <div class="body">
        <div class="list">${panelItems.map(([i, t], n) => html`<button class=${n ? "" : "on"}>${icon(i)}${t}</button>`)}</div>
        <section class="props">
          <div class="ptools">
            <button aria-label="Por categoría">${icon("propiedades")}</button><i></i>
            <button aria-label="Ordenar">${icon("ordenar")}</button><i></i>
            <button aria-label="Atrás">${icon("atras")}<span class="caret dim"></span></button>
            <button aria-label="Adelante">${icon("adelante")}<span class="caret dim"></span></button>
            <span>Armário</span>
          </div>
          <div class="banner">${icon("armario")}<a href="#">Configure en Constructor de Armarios</a>${icon("info")}</div>
          <div class="group"><button class="toggle" aria-label="Contraer Favoritos"><svg viewBox="0 0 7 7"><path d="M1 3.500h5"/></svg></button>Favoritos</div>
          <div class="entry">
            <button class="toggle" aria-label="Expandir"><svg viewBox="0 0 7 7"><path d="M1 3.500h5M3.500 1v5"/></svg></button>
            <label><input type="checkbox">Calceiro Deslizante (Calceiro Deslizante)</label>
            <button aria-label="Eliminar">${icon("equis")}</button>
          </div>
        </section>
      </div>
      <svg class="pointer" viewBox="559 361 124 54" aria-hidden="true">
        <defs><linearGradient id="ag"><stop offset="0" stop-color="#4c5686"/><stop offset=".45" stop-color="#a3b2dc"/><stop offset="1" stop-color="#465389"/></linearGradient></defs>
        <path d="M559 363Q580 380 612 385 640 387 656 381L655 368 681 388 661 411 658 400Q625 409 597 396 573 383 559 363z" fill="url(#ag)"/>
      </svg>
    </aside>`;
  }
}
